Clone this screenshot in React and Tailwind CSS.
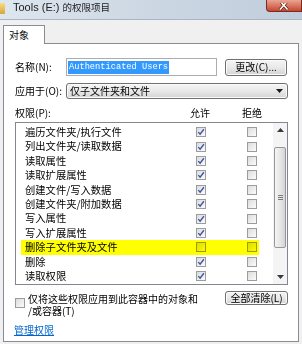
import React from "react";

const perms = [
  ["遍历文件夹/执行文件", true],
  ["列出文件夹/读取数据", true],
  ["读取属性", true],
  ["读取扩展属性", true],
  ["创建文件/写入数据", true],
  ["创建文件夹/附加数据", true],
  ["写入属性", true],
  ["写入扩展属性", true],
  ["删除子文件夹及文件", false],
  ["删除", true],
  ["读取权限", true],
];

const btn =
  "border border-[#707070] rounded-[3px] bg-gradient-to-b from-[#f4f4f4] via-[#e9e9e9] to-[#d3d3d3] shadow-[inset_0_0_0_1px_#fbfbfb]";

function Box({ checked }) {
  return (
    <div className="w-[10px] h-[10px] shrink-0 border border-[#9c9c9c] bg-gradient-to-br from-[#dcdcdc] to-[#fbfbfb] flex items-center justify-center">
      {checked && (
        <svg width="8" height="8" viewBox="0 0 8 8">
          <path d="M1.3 4.1 L3.1 6.1 L6.9 1.3" stroke="#3b55a3" strokeWidth="1.4" fill="none" />
        </svg>
      )}
    </div>
  );
}

export default function App() {
  return (
    <div className="w-[302px] h-[344px] overflow-hidden bg-[#f0f0f0] flex flex-col font-['Noto_Sans_CJK_SC','Liberation_Sans',sans-serif] text-[10px] leading-none text-black">
      {/* title bar */}
      <div className="h-[20px] shrink-0 flex items-start bg-gradient-to-r from-[#dee6ee] via-[#ccd7e3] to-[#c0cddc] border-b border-[#a9b5c2]">
        <div className="mt-[3px] w-[5px] h-[11px] bg-gradient-to-b from-[#f7de80] to-[#d6a536] rounded-r-[1px]" />
        <div className="ml-[8px] mt-[1px] h-[13px] flex items-center text-[#1c1c1c]">
          <span className="font-['Liberation_Sans',sans-serif] text-[11px]">Tools (E:)</span>
          <span className="ml-[3px] text-[9.5px]">的权限项目</span>
        </div>
        <div className="ml-auto w-[36px] h-[12px] rounded-bl-[4px] border border-t-0 border-[#7b2a1f] bg-gradient-to-b from-[#e9a493] to-[#c6452e] flex items-end justify-center overflow-hidden">
          <svg width="10" height="8" viewBox="0 0 10 8">
            <path d="M1 -2 L8.5 6.5 M8.5 -2 L1 6.5" stroke="#5a1d14" strokeWidth="3" />
            <path d="M1 -2 L8.5 6.5 M8.5 -2 L1 6.5" stroke="#ffffff" strokeWidth="1.6" />
          </svg>
        </div>
      </div>

      {/* tab strip */}
      <div className="shrink-0 pt-[5px] pl-[3px] flex">
        <div className="relative z-10 -mb-px w-[42px] h-[19px] border border-b-0 border-[#898c95] bg-white flex items-center pl-[5px]">
          对象
        </div>
      </div>

      {/* tab panel */}
      <div className="ml-[3px] w-[296px] h-[299px] shrink-0 border border-[#898c95] bg-white flex flex-col">
        {/* name row */}
        <div className="mt-[14px] h-[18px] pl-[11px] flex items-center">
          <div className="w-[51px]">名称(N):</div>
          <div className="w-[151px] h-[18px] border border-[#abadb3] bg-white flex items-center pl-[1px]">
            <span className="bg-[#3399ff] text-white font-['Liberation_Mono',monospace] text-[8.7px] leading-[13px] px-[1px]">
              Authenticated Users
            </span>
          </div>
          <div className={`ml-[8px] w-[62px] h-[17px] ${btn} flex items-center justify-center`}>更改(C)...</div>
        </div>

        {/* apply row */}
        <div className="mt-[7px] h-[16px] pl-[11px] flex items-center">
          <div className="w-[51px]">应用于(O):</div>
          <div className={`w-[222px] h-[16px] ${btn} flex items-center pl-[3px] pr-[4px]`}>
            <span>仅子文件夹和文件</span>
            <svg className="ml-auto" width="7" height="4" viewBox="0 0 7 4">
              <path d="M0 0 H7 L3.5 4 Z" fill="#1a1a1a" />
            </svg>
          </div>
        </div>

        {/* header */}
        <div className="mt-[7px] h-[14px] pl-[11px] flex items-center">
          <div className="w-[175px]">权限(P):</div>
          <div className="w-[52px]">允许</div>
          <div>拒绝</div>
        </div>

        {/* list */}
        <div className="mt-[2px] ml-[11px] w-[273px] h-[163px] border border-[#828790] bg-white flex">
          <div className="relative flex-1 pt-[2px] text-[10.3px]">
            {perms.map(([name, allow]) => (
              <div key={name} className="h-[14.4px] pl-[9px] flex items-center">
                <div className="w-[171px] whitespace-nowrap">{name}</div>
                <Box checked={allow} />
                <div className="w-[41px]" />
                <Box checked={false} />
              </div>
            ))}
            <div className="absolute left-[5px] top-[117px] w-[238px] h-[15px] bg-[#ffff00] mix-blend-multiply rounded-[1px]" />
          </div>
          <div className="w-[14px] bg-[#f4f4f4] flex flex-col items-center">
            <div className="h-[24px] pt-[5px]">
              <svg width="7" height="4" viewBox="0 0 7 4">
                <path d="M0 4 H7 L3.5 0 Z" fill="#3a3a3a" />
              </svg>
            </div>
            <div className="w-[12px] h-[101px] rounded-[2px] border border-[#979797] bg-gradient-to-r from-[#f5f5f5] via-[#e7e7e7] to-[#d4d4d4] flex flex-col items-center justify-center gap-[1px]">
              <div className="w-[5px] h-px bg-[#7a7a7a]" />
              <div className="w-[5px] h-px bg-[#7a7a7a]" />
              <div className="w-[5px] h-px bg-[#7a7a7a]" />
            </div>
            <div className="flex-1" />
            <div className="pb-[5px]">
              <svg width="7" height="4" viewBox="0 0 7 4">
                <path d="M0 0 H7 L3.5 4 Z" fill="#3a3a3a" />
              </svg>
            </div>
          </div>
        </div>

        {/* bottom row */}
        <div className="mt-[6px] pl-[11px] pr-[10px] flex items-start">
          <div className="mt-[7px]">
            <Box checked={false} />
          </div>
          <div className="ml-[3px] mt-[2px] w-[180px] leading-[12px]">
            仅将这些权限应用到此容器中的对象和
            <br />
            /或容器(T)
          </div>
          <div className={`ml-auto w-[63px] h-[14px] ${btn} flex items-center justify-center`}>全部清除(L)</div>
        </div>

        <div className="mt-[7px] pl-[10px] leading-[12px]">
          <span className="text-[#0066cc] underline underline-offset-[1px]">管理权限</span>
        </div>
      </div>
    </div>
  );
}
